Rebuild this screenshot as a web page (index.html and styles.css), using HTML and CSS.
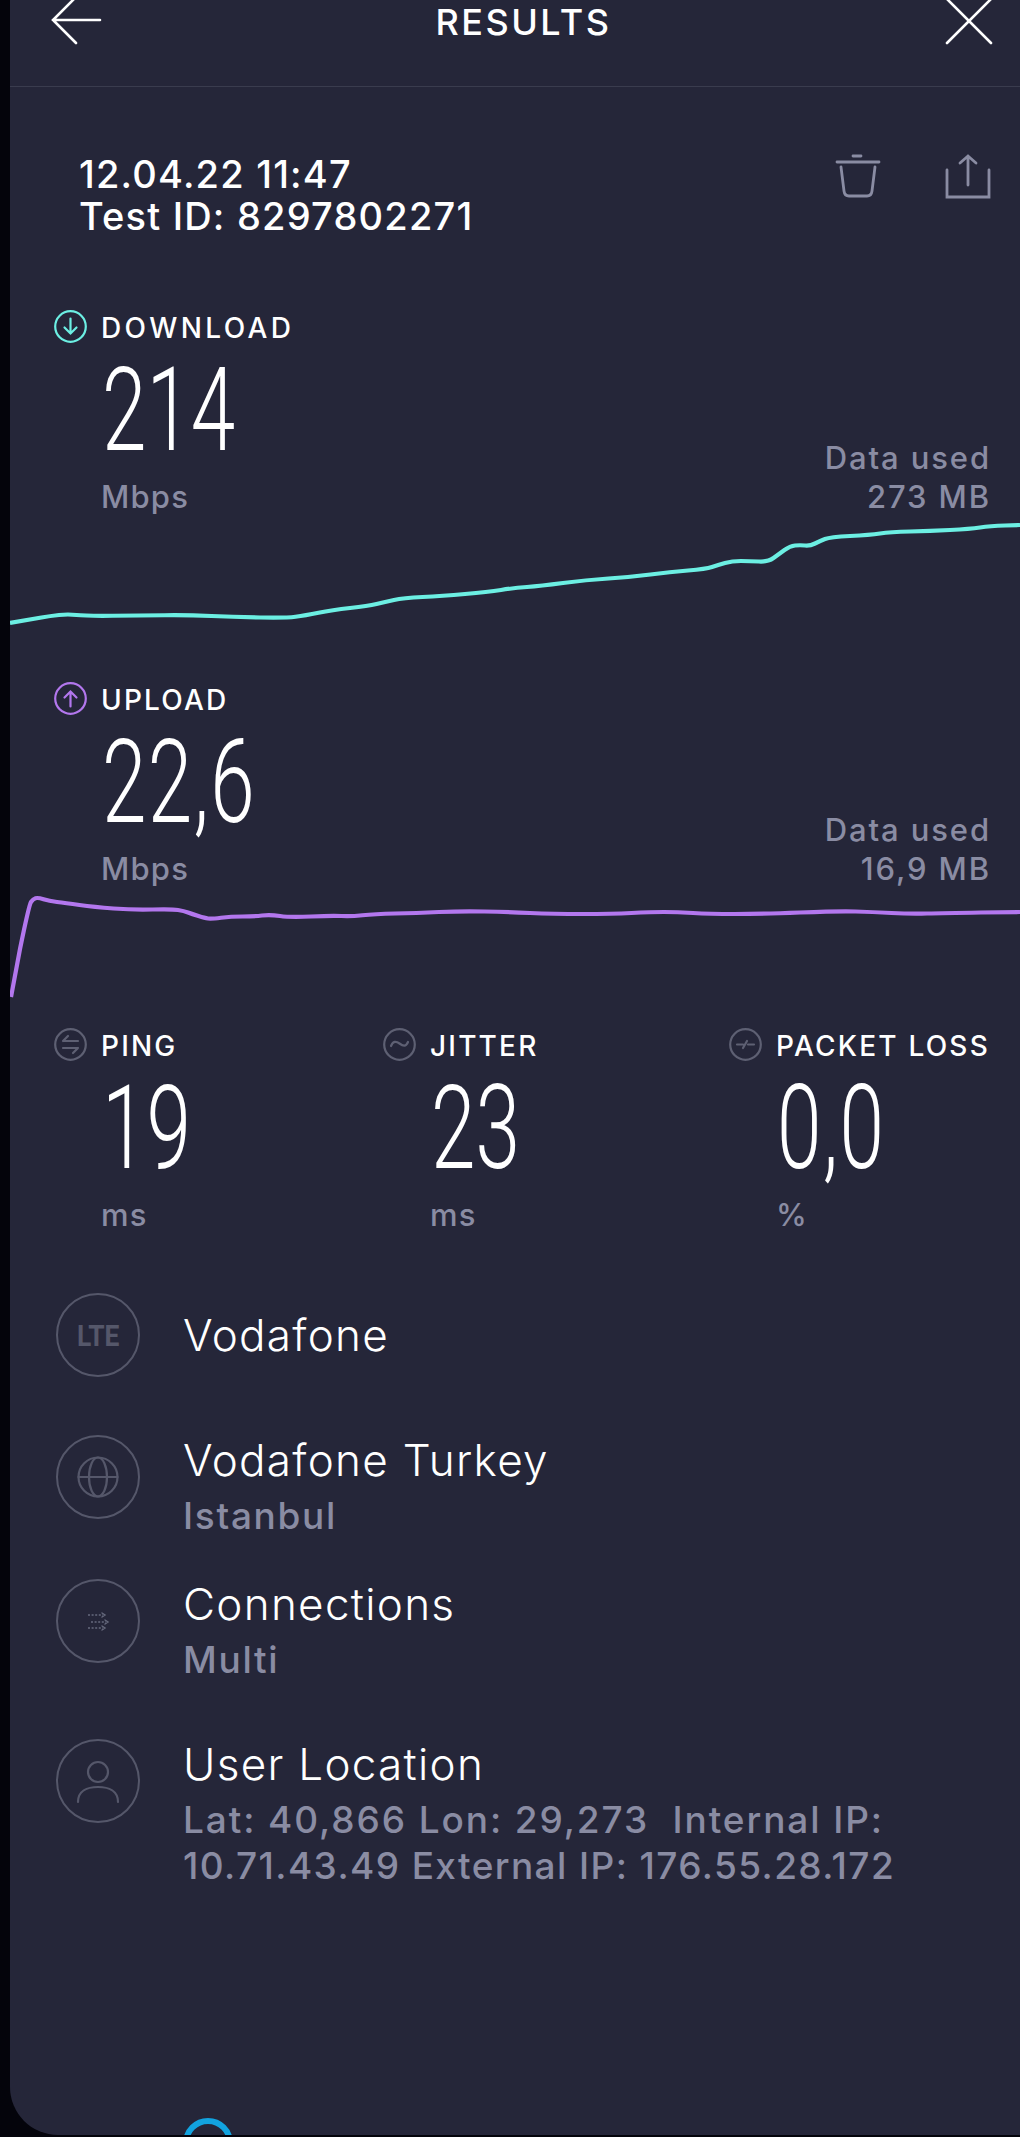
FILE: index.html
```html
<!DOCTYPE html>
<html lang="en">
<head>
<meta charset="utf-8">
<title>Results</title>
<link rel="stylesheet" href="styles.css">
</head>
<body>
<main class="panel">
  <header class="topbar">
    <svg class="top-icon back" viewBox="0 0 51 44"><path d="M50 20H3M26 -3 3 20l23 23"/></svg>
    <h1 class="title">RESULTS</h1>
    <svg class="top-icon close" viewBox="0 0 46 44"><path d="M1 -1 45 43M45 -1 1 43"/></svg>
  </header>

  <section class="meta">
    <p class="stamp">12.04.22 11:47<br>Test ID: 8297802271</p>
    <div class="actions">
      <svg class="action" viewBox="0 0 44 44"><path d="M1 8h42M17 2h8M5 13l3 24q.6 5 5 5h18q4.400 0 5-5l3-24"/></svg>
      <svg class="action" viewBox="0 0 44 44"><path d="M1 16v27h42V16M22 31V2M14 9l8-7 8 7"/></svg>
    </div>
  </section>

  <section class="metric metric-first">
    <div class="metric-head">
      <svg class="dot dot-down" viewBox="0 0 33 33"><circle cx="16.500" cy="16.500" r="15.300"/><path d="M16.500 8.500v15M10.500 17.500l6 6 6-6"/></svg>
      <span class="label label-wide">DOWNLOAD</span>
    </div>
    <div class="metric-body">
      <div>
        <div class="value"><span class="digits">214</span></div>
        <div class="unit">Mbps</div>
      </div>
      <div class="used">Data used<br>273 MB</div>
    </div>
    <svg class="chart chart-down" viewBox="10 520 1010 110"><path d="M10 623Q33 619 41.500 617.500Q50 616 59 615Q68 614 76.500 615Q85 616 112.500 615.750Q140 615.500 164.500 615.250Q189 615 211.500 616Q234 617 260 617.500Q286 618 295.500 616.750Q305 615.500 318.500 612.750Q332 610 350 608Q368 606 376.500 604Q385 602 394 600Q403 598 422.500 597Q442 596 465 594Q488 592 501 590Q514 588 527 587Q540 586 563 583Q586 580 608.500 578.500Q631 577 650.500 574.500Q670 572 688 570.500Q706 569 712 567Q718 565 725 563Q732 561 741 561Q750 561 759 561.500Q768 562 773.500 558Q779 554 784.500 550Q790 546 795 545.500Q800 545 805 545.500Q810 546 815 543.500Q820 541 825 539Q830 537 850 536Q870 535 880 533.500Q890 532 910 531.500Q930 531 950 530Q970 529 980 527.500Q990 526 1005 525.500L1020 525"/></svg>
  </section>

  <section class="metric metric-second">
    <div class="metric-head">
      <svg class="dot dot-up" viewBox="0 0 33 33"><circle cx="16.500" cy="16.500" r="15.300"/><path d="M16.500 24.500v-15M10.500 15.500l6-6 6 6"/></svg>
      <span class="label">UPLOAD</span>
    </div>
    <div class="metric-body">
      <div>
        <div class="value"><span class="digits digits-comma">22,6</span></div>
        <div class="unit">Mbps</div>
      </div>
      <div class="used">Data used<br>16,9 MB</div>
    </div>
    <svg class="chart chart-up" viewBox="10 890 1010 110"><path d="M11 995L20 947Q29 903 31 900Q33 897 35.500 896.250Q38 895.500 43.500 897.250Q49 899 57 900Q65 901 79.500 903Q94 905 113.500 906.500Q133 908 152.500 907.500Q172 907 178 908Q184 909 188 910.500Q192 912 198.500 914Q205 916 208 916.500Q211 917 221 915.750Q231 914.500 242.500 914.500Q254 914.500 262 913.500Q270 912.500 280 914Q290 915.500 311 914.500Q332 913.500 341.500 914Q351 914.500 362.500 913.250Q374 912 395 911.500Q416 911 439 910Q462 909 484.500 909.500Q507 910 530 911Q553 912 582.500 912Q612 912 631.500 911Q651 910 664 910Q677 910 693 911Q709 912 735 912Q761 912 800 910.500Q839 909 855.500 909.500Q872 910 891.500 911Q911 912 927 911.500Q943 911 981 910.500L1020 910"/></svg>
  </section>

  <section class="trio">
    <div class="stat">
      <div class="metric-head">
        <svg class="dot dot-grey" viewBox="0 0 33 33"><circle cx="16.500" cy="16.500" r="15.300"/><path d="M9 13h15M9 13l5-5M24 20H9M24 20l-5 5"/></svg>
        <span class="label">PING</span>
      </div>
      <div class="value"><span class="digits">19</span></div>
      <div class="unit">ms</div>
    </div>
    <div class="stat">
      <div class="metric-head">
        <svg class="dot dot-grey" viewBox="0 0 33 33"><circle cx="16.500" cy="16.500" r="15.300"/><path d="M8 18c2-5 5-5 8.500-2.500S23 19 25 14"/></svg>
        <span class="label">JITTER</span>
      </div>
      <div class="value"><span class="digits">23</span></div>
      <div class="unit">ms</div>
    </div>
    <div class="stat">
      <div class="metric-head">
        <svg class="dot dot-grey" viewBox="0 0 33 33"><circle cx="16.500" cy="16.500" r="15.300"/><path d="M8 16.500h6M19 16.500h6M14 20l4-7"/></svg>
        <span class="label">PACKET LOSS</span>
      </div>
      <div class="value"><span class="digits digits-comma">0,0</span></div>
      <div class="unit">%</div>
    </div>
  </section>

  <section class="rows">
    <div class="row row-center">
      <div class="badge"><span class="lte">LTE</span></div>
      <div class="row-text"><div class="row-title">Vodafone</div></div>
    </div>
    <div class="row row-isp">
      <div class="badge"><svg class="badge-icon" viewBox="0 0 42 42"><circle cx="21" cy="21" r="19.500"/><ellipse cx="21" cy="21" rx="9" ry="19.500"/><path d="M1.500 21h39"/></svg></div>
      <div class="row-text"><div class="row-title">Vodafone Turkey</div><div class="row-sub">Istanbul</div></div>
    </div>
    <div class="row row-conn">
      <div class="badge"><svg class="badge-icon badge-small" viewBox="0 0 21 17"><path class="dash" d="M0 2h15M3 9h15M0 15h15"/><path d="M14 0l3 2-3 2M17 7l3 2-3 2M14 13l3 2-3 2"/></svg></div>
      <div class="row-text"><div class="row-title">Connections</div><div class="row-sub">Multi</div></div>
    </div>
    <div class="row row-user">
      <div class="badge"><svg class="badge-icon badge-user" viewBox="0 0 42 42"><circle cx="21" cy="12" r="10"/><path d="M1 42c0-11 9-15 20-15s20 4 20 15"/></svg></div>
      <div class="row-text"><div class="row-title">User Location</div><div class="row-sub"><span class="line-first">Lat: 40,866 Lon: 29,273&nbsp; Internal IP:</span><br><span class="line-second">10.71.43.49 External IP: 176.55.28.172</span></div></div>
    </div>
  </section>
  <div class="spinner"></div>
</main>
</body>
</html>
```
FILE: styles.css
```css
* { box-sizing: border-box; }
html, body { margin: 0; padding: 0; }
body {
  width: 1020px;
  height: 2137px;
  overflow: hidden;
  background: #04040b;
  font-family: "Inter", "Liberation Sans", sans-serif;
  color: #fff;
}
.panel {
  position: relative;
  width: 1010px;
  height: 2135px;
  margin-left: 10px;
  overflow: hidden;
  background: #252639;
  border-bottom-left-radius: 48px;
}
.topbar {
  height: 87px;
  padding: 0 28px 0 40px;
  display: flex;
  justify-content: space-between;
  align-items: flex-start;
  border-bottom: 1px solid #3a3c4e;
}
.top-icon { fill: none; stroke: #fff; stroke-width: 2.600; stroke-linecap: round; overflow: visible; }
.back { width: 51px; height: 44px; }
.close { width: 46px; height: 44px; }
.title { margin: 0; font-size: 36px; line-height: 44px; font-weight: 500; letter-spacing: 2.500px; }
.meta {
  display: flex;
  justify-content: space-between;
  padding: 66px 30px 0 69px;
  height: 223px;
}
.stamp { margin: 0; font-size: 38px; line-height: 42px; font-weight: 500; letter-spacing: 1.200px; }
.actions { display: flex; gap: 66px; padding-top: 2px; }
.action { width: 44px; height: 44px; margin-top: -1px; fill: none; stroke: #8a8ca3; stroke-width: 2.800; stroke-linecap: round; overflow: visible; }
.metric-first { height: 372px; }
.metric-second { height: 346px; }
.metric-head { display: flex; align-items: center; gap: 14px; height: 36px; padding-left: 44px; }
.stat .metric-head { padding-left: 0; }
.dot { width: 33px; height: 33px; flex: none; margin-top: -4px; fill: none; stroke-width: 2.200; stroke-linecap: round; }
.dot-down { stroke: #6cefe3; }
.dot-up { stroke: #b377ee; }
.dot-grey { stroke: #5e6073; }
.label { font-size: 28px; line-height: 36px; font-weight: 500; letter-spacing: 2.200px; }
.label-wide { letter-spacing: 3.400px; }
.metric-body { display: flex; justify-content: space-between; align-items: flex-end; padding: 0 29px 0 92px; }
.value { height: 113px; margin-top: 8px; }
.digits {
  display: inline-block;
  font-family: "Roboto", "Liberation Sans", sans-serif;
  font-size: 116px;
  line-height: 113px;
  font-weight: 300;
  transform: scaleX(.69);
  transform-origin: left center;
}
.digits-comma { letter-spacing: 2px; }
.unit { font-size: 31px; line-height: 40px; font-weight: 500; letter-spacing: 1.200px; color: #8a8ca3; margin: 10px 0 0 -1px; }
.used { font-size: 31px; line-height: 39px; font-weight: 500; letter-spacing: 1.900px; color: #8a8ca3; text-align: right; margin-bottom: 1px; }
.chart { display: block; width: 1010px; height: 110px; overflow: visible; fill: none; stroke-width: 4.200; stroke-linejoin: round; stroke-linecap: butt; }
.chart-down { stroke: #6cefe3; margin-top: 3px; }
.chart-up { stroke: #b377ee; margin-top: 3px; }
.trio { display: grid; grid-template-columns: 329px 346px auto; padding-left: 44px; height: 265px; }
.stat .value { margin-left: 48px; }
.stat .unit { margin-left: 47px; }
.rows { padding-left: 46px; }
.row { display: flex; align-items: flex-start; gap: 43px; }
.row-center { align-items: center; }
.row-isp { margin-top: 58px; }
.row-conn { margin-top: 40px; }
.row-user { margin-top: 56px; }
.badge {
  width: 84px;
  height: 84px;
  flex: none;
  display: flex;
  align-items: center;
  justify-content: center;
  border: 2.500px solid #55576a;
  border-radius: 50%;
}
.lte { font-family: "Roboto", sans-serif; font-size: 30px; font-weight: 700; color: #55576a; transform: scaleX(.88); }
.badge-icon { width: 42px; height: 42px; fill: none; stroke: #55576a; stroke-width: 2.200; stroke-linecap: round; }
.badge-small { width: 21px; height: 17px; stroke-width: 1.400; overflow: visible; stroke: #666a7d; }
.dash { stroke-dasharray: 2 1.600; stroke-linecap: butt; }
.badge-user { overflow: visible; }
.row-title { font-size: 44px; line-height: 50px; font-weight: 300; letter-spacing: 1.300px; }
.row-sub { font-size: 37px; line-height: 46px; font-weight: 500; letter-spacing: 1.700px; color: #8a8ca3; margin-top: 8px; white-space: nowrap; }
.line-first { letter-spacing: 1.900px; }
.line-second { letter-spacing: 1.400px; }
.spinner {
  position: absolute;
  left: 173px;
  top: 2118px;
  width: 50px;
  height: 50px;
  border: 6px solid #12a3df;
  border-radius: 50%;
}
```
